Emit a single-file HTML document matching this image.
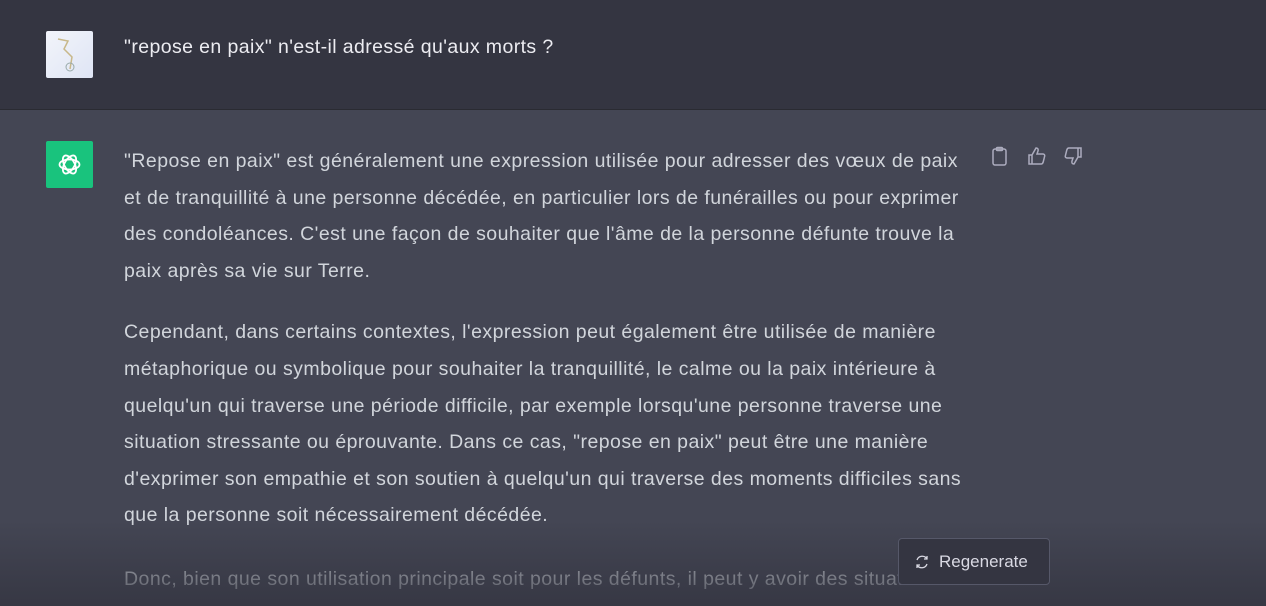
<!DOCTYPE html>
<html><head><meta charset="utf-8"><style>
html,body{margin:0;width:1266px;height:606px;overflow:hidden}
body{background:#444654;font-family:"Liberation Sans",sans-serif;position:relative}
.wrap{position:absolute;left:0;top:0;width:1266px;height:606px;overflow:hidden}
.top{position:absolute;left:0;top:0;width:1266px;height:109px;background:#343541;border-bottom:1px solid #2a2b32}
.av{position:absolute;left:46px;top:31px;width:47px;height:47px;border-radius:2px;background:linear-gradient(135deg,#f2f4fa,#dfe5f5)}
.q{position:absolute;left:124px;top:36px;color:#ececf1;font-size:19.5px;letter-spacing:0.4px}
.gpt{position:absolute;left:46px;top:141px;width:47px;height:47px;border-radius:2px;background:#19c37d}
.txt{position:absolute;left:124px;top:143px;color:#d1d5db;font-size:19.5px;letter-spacing:0.45px;line-height:36.6px;white-space:nowrap;height:463px;overflow:hidden}
.txt p{margin:0 0 25px}
.txt p.b{margin-bottom:27px}
.fade{position:absolute;left:0;top:520px;width:1266px;height:86px;background:linear-gradient(rgba(52,53,65,0),rgba(52,53,65,0.85))}
.btn{position:absolute;left:898px;top:538px;width:152px;height:47px;box-sizing:border-box;border:1px solid #565869;border-radius:4px;background:#343541;color:#d9d9e3;font-size:17px;display:flex;align-items:center;padding-left:16px;gap:10px}
.ic{position:absolute;top:146px}
</style></head><body><div class="wrap">
<div class="top">
<div class="av"><svg width="47" height="47"><path d="M12 8 L22 10 L18 18 L26 26 L24 38" stroke="#c8b88a" stroke-width="1.5" fill="none"/><circle cx="24" cy="36" r="4" stroke="#9aa" fill="none"/></svg></div>
<div class="q">"repose en paix" n'est-il adressé qu'aux morts ?</div>
</div>
<div class="gpt"><svg width="47" height="47" viewBox="0 0 47 47"><g fill="none" stroke="#fff" stroke-width="1.8"><ellipse cx="23.5" cy="23.5" rx="10" ry="5" /><ellipse cx="23.5" cy="23.5" rx="10" ry="5" transform="rotate(60 23.5 23.5)"/><ellipse cx="23.5" cy="23.5" rx="10" ry="5" transform="rotate(120 23.5 23.5)"/></g></svg></div>
<div class="txt">
<p>"Repose en paix" est généralement une expression utilisée pour adresser des vœux de paix<br>et de tranquillité à une personne décédée, en particulier lors de funérailles ou pour exprimer<br>des condoléances. C'est une façon de souhaiter que l'âme de la personne défunte trouve la<br>paix après sa vie sur Terre.</p>
<p class="b">Cependant, dans certains contextes, l'expression peut également être utilisée de manière<br>métaphorique ou symbolique pour souhaiter la tranquillité, le calme ou la paix intérieure à<br>quelqu'un qui traverse une période difficile, par exemple lorsqu'une personne traverse une<br>situation stressante ou éprouvante. Dans ce cas, "repose en paix" peut être une manière<br>d'exprimer son empathie et son soutien à quelqu'un qui traverse des moments difficiles sans<br>que la personne soit nécessairement décédée.</p>
<p>Donc, bien que son utilisation principale soit pour les défunts, il peut y avoir des situations<br>où l'expression est utilisée de manière plus large pour souhaiter la paix intérieure à quelqu'un.</p>
</div>
<svg class="ic" style="left:990px" width="20" height="20" viewBox="0 0 20 20" fill="none" stroke="#acacbe" stroke-width="1.5"><rect x="3" y="3" width="13" height="16" rx="2"/><rect x="6.5" y="1.5" width="6" height="3" rx="1"/></svg>
<svg class="ic" style="left:1027px" width="20" height="20" viewBox="0 0 20 20" fill="none" stroke="#acacbe" stroke-width="1.5"><path d="M2 9h3v9H2zM5 9l4-7c2 0 2.5 1.5 2 3l-1 3h6c1 0 2 1 1.7 2l-1.5 6c-.3 1-1 2-2 2H5"/></svg>
<svg class="ic" style="left:1063px" width="20" height="20" viewBox="0 0 20 20" fill="none" stroke="#acacbe" stroke-width="1.5"><path d="M18 11h-3V2h3zM15 11l-4 7c-2 0-2.5-1.5-2-3l1-3H4c-1 0-2-1-1.7-2l1.5-6c.3-1 1-2 2-2H15"/></svg>
<div class="fade"></div>
<div class="btn"><svg width="14" height="14" viewBox="0 0 14 14" fill="none" stroke="#d9d9e3" stroke-width="1.3"><path d="M2 5a5.5 5.5 0 0 1 10-1M12 9a5.5 5.5 0 0 1-10 1M12 1v3h-3M2 13v-3h3"/></svg>Regenerate</div>
</div></body></html>
